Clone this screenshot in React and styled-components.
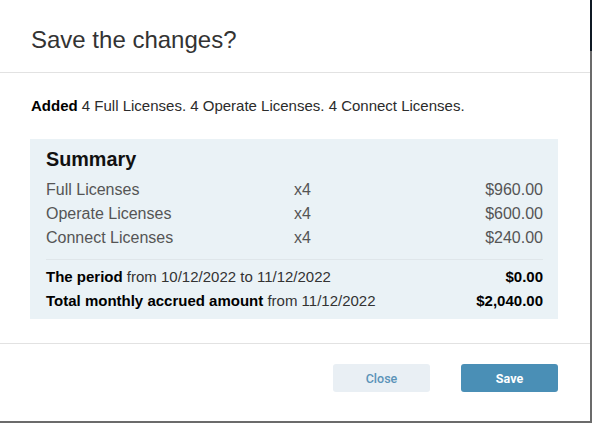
import React from "react";
import styled, { createGlobalStyle } from "styled-components";

const GlobalStyle = createGlobalStyle`
  html, body {
    margin: 0;
    padding: 0;
  }
  body {
    font-family: "Liberation Sans", Arial, sans-serif;
    background: linear-gradient(to bottom, #0f1924 0, #0f1924 51px, #6b6b6b 51px);
    min-height: 100vh;
  }
`;

const Dialog = styled.div`
  width: 590px;
  height: 421px;
  background: #fff;
  display: flex;
  flex-direction: column;
  box-sizing: border-box;
`;

const Header = styled.div`
  height: 73px;
  box-sizing: border-box;
  border-bottom: 1px solid #e2e2e2;
  padding: 8px 31px 0;
  display: flex;
  align-items: center;
`;

const Title = styled.h2`
  margin: 0;
  font-size: 24px;
  line-height: 28px;
  font-weight: 400;
  color: #333;
`;

const Body = styled.div`
  padding: 24px 32px 24px 30px;
  border-bottom: 1px solid #e2e2e2;
  flex: 0 0 auto;
`;

const Message = styled.p`
  margin: 0 0 24px 1px;
  font-size: 15px;
  line-height: 18px;
  color: #2b2b2b;
  b {
    font-weight: 700;
    color: #000;
  }
`;

const Summary = styled.div`
  background: #eaf2f6;
  padding: 9px 15px 6px 16px;
`;

const SummaryTitle = styled.h3`
  margin: 0 0 8px;
  font-size: 19.8px;
  font-weight: 700;
  color: #111;
  line-height: 22px;
`;

const Line = styled.div`
  display: grid;
  grid-template-columns: 248px 1fr auto;
  font-size: 16px;
  line-height: 24px;
  color: #555;
`;

const Price = styled.span`
  text-align: right;
`;

const Divider = styled.div`
  height: 1px;
  background: #dfe6ea;
  margin: 9px 0 5px;
`;

const TotalLine = styled.div`
  display: flex;
  justify-content: space-between;
  font-size: 15px;
  line-height: 24px;
  color: #333;
  b {
    font-weight: 700;
    color: #000;
  }
`;

const Footer = styled.div`
  flex: 1;
  display: flex;
  justify-content: flex-end;
  align-items: flex-start;
  gap: 31px;
  padding: 20px 32px 0 0;
`;

const Button = styled.button`
  width: 97px;
  height: 28px;
  border: none;
  border-radius: 3px;
  font-family: Roboto, "Liberation Sans", sans-serif;
  font-size: 12.5px;
  font-weight: ${(p) => (p.$primary ? 700 : 500)};
  background: ${(p) => (p.$primary ? "#4a8fb6" : "#e9eff4")};
  color: ${(p) => (p.$primary ? "#fff" : "#5b93b8")};
  cursor: pointer;
`;

const items = [
  { name: "Full Licenses", qty: "x4", price: "$960.00" },
  { name: "Operate Licenses", qty: "x4", price: "$600.00" },
  { name: "Connect Licenses", qty: "x4", price: "$240.00" },
];

export default function App() {
  return (
    <>
      <GlobalStyle />
      <Dialog>
        <Header>
          <Title>Save the changes?</Title>
        </Header>
        <Body>
          <Message>
            <b>Added</b> 4 Full Licenses. 4 Operate Licenses. 4 Connect Licenses.
          </Message>
          <Summary>
            <SummaryTitle>Summary</SummaryTitle>
            {items.map((it) => (
              <Line key={it.name}>
                <span>{it.name}</span>
                <span>{it.qty}</span>
                <Price>{it.price}</Price>
              </Line>
            ))}
            <Divider />
            <TotalLine>
              <span>
                <b>The period</b> from 10/12/2022 to 11/12/2022
              </span>
              <b>$0.00</b>
            </TotalLine>
            <TotalLine>
              <span>
                <b>Total monthly accrued amount</b> from 11/12/2022
              </span>
              <b>$2,040.00</b>
            </TotalLine>
          </Summary>
        </Body>
        <Footer>
          <Button>Close</Button>
          <Button $primary>Save</Button>
        </Footer>
      </Dialog>
    </>
  );
}
